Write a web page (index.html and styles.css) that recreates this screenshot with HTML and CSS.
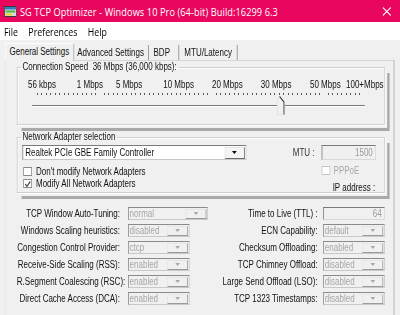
FILE: index.html
```html
<!DOCTYPE html>
<html>
<head>
<meta charset="utf-8">
<link rel="stylesheet" href="styles.css">
</head>
<body>
<div class="screen">
<div class="window">
  <div class="titlebar">
    <svg class="appicon" width="16" height="11" viewBox="0 0 16 11">
      <rect x="0.5" y="0.5" width="15" height="10" fill="#d8d8d8" stroke="#3a3a3a"/>
      <rect x="1" y="1" width="14" height="2.5" fill="#2f7fc0"/>
      <rect x="2" y="4.5" width="12" height="2" fill="#48b848"/>
      <rect x="2" y="7.5" width="8" height="2" fill="#e6d62c"/>
    </svg>
    <span class="title">SG TCP Optimizer - Windows 10 Pro (64-bit) Build:16299 6.3</span>
    <svg class="close" width="11" height="9" viewBox="0 0 11 9">
      <path d="M0.5 0.5 L10.5 8.5 M10.5 0.5 L0.5 8.5" stroke="#fff" stroke-width="1.1"/>
    </svg>
  </div>
  <div class="menubar">
    <span>File</span><span>Preferences</span><span>Help</span>
  </div>
  <div class="client">
    <div class="tabs">
      <span class="tab active">General Settings</span>
      <span class="tab">Advanced Settings</span>
      <span class="tab bdp">BDP</span>
      <span class="tab last">MTU/Latency</span>
    </div>
    <div class="tabpanel">
      <fieldset class="group speed">
        <legend>Connection Speed&nbsp; 36 Mbps (36,000 kbps):</legend>
        <div class="scale-labels">
          <span>56 kbps</span><span>1 Mbps</span><span>5 Mbps</span><span>10 Mbps</span><span>20 Mbps</span><span>30 Mbps</span><span>50 Mbps</span><span>100+Mbps</span>
        </div>
        <div class="ticks"></div>
        <div class="track">
          <svg class="thumb" width="10" height="19" viewBox="0 0 10 19">
            <path d="M0.5 4.5 L3.5 0.5 L9.5 6 L9.5 18.5 L0.5 18.5 Z" fill="#f0f0f0" stroke="#e0e0e0"/>
            <path d="M3.5 0.5 L9 6 L9 18.5" fill="none" stroke="#3c3c3c" stroke-width="1.2"/>
          </svg>
        </div>
      </fieldset>

      <fieldset class="group adapter">
        <legend>Network Adapter selection</legend>
        <div class="adapter-grid">
          <div class="adapter-left">
            <div class="combo">
              <span class="combo-text">Realtek PCIe GBE Family Controller</span>
              <span class="combo-btn"><svg width="6" height="3" viewBox="0 0 6 3"><path d="M0 0 H6 L3 3 Z" fill="#000"/></svg></span>
            </div>
            <label class="check"><span class="box"></span>Don't modify Network Adapters</label>
            <label class="check"><span class="box"><svg width="9" height="8" viewBox="0 0 9 8"><path d="M1.5 4 L3.8 6.3 L7.8 1.5" fill="none" stroke="#333" stroke-width="1.2"/></svg></span>Modify All Network Adapters</label>
          </div>
          <div class="adapter-right">
            <div class="mtu-row"><span class="mtu-label">MTU :</span><span class="field num">1500</span></div>
            <label class="check disabled pppoe"><span class="box"></span>PPPoE</label>
            <div class="ip">IP address :</div>
          </div>
        </div>
      </fieldset>

      <div class="settings">
        <span class="lbl">TCP Window Auto-Tuning:</span>
        <span class="cell"><span class="select wide"><span class="val">normal</span><span class="arr"><svg width="6" height="3" viewBox="0 0 6 3"><path d="M0 0 H6 L3 3 Z" fill="#a8a8a8"/></svg></span></span></span>
        <span class="lbl">Time to Live (TTL) :</span>
        <span class="cell right"><span class="field ttl">64</span></span>

        <span class="lbl">Windows Scaling heuristics:</span>
        <span class="cell"><span class="select"><span class="val">disabled</span><span class="arr"><svg width="6" height="3" viewBox="0 0 6 3"><path d="M0 0 H6 L3 3 Z" fill="#a8a8a8"/></svg></span></span></span>
        <span class="lbl">ECN Capability:</span>
        <span class="cell right"><span class="select"><span class="val">default</span><span class="arr"><svg width="6" height="3" viewBox="0 0 6 3"><path d="M0 0 H6 L3 3 Z" fill="#a8a8a8"/></svg></span></span></span>

        <span class="lbl">Congestion Control Provider:</span>
        <span class="cell"><span class="select"><span class="val">ctcp</span><span class="arr"><svg width="6" height="3" viewBox="0 0 6 3"><path d="M0 0 H6 L3 3 Z" fill="#a8a8a8"/></svg></span></span></span>
        <span class="lbl">Checksum Offloading:</span>
        <span class="cell right"><span class="select"><span class="val">enabled</span><span class="arr"><svg width="6" height="3" viewBox="0 0 6 3"><path d="M0 0 H6 L3 3 Z" fill="#a8a8a8"/></svg></span></span></span>

        <span class="lbl">Receive-Side Scaling (RSS):</span>
        <span class="cell"><span class="select"><span class="val">enabled</span><span class="arr"><svg width="6" height="3" viewBox="0 0 6 3"><path d="M0 0 H6 L3 3 Z" fill="#a8a8a8"/></svg></span></span></span>
        <span class="lbl">TCP Chimney Offload:</span>
        <span class="cell right"><span class="select"><span class="val">disabled</span><span class="arr"><svg width="6" height="3" viewBox="0 0 6 3"><path d="M0 0 H6 L3 3 Z" fill="#a8a8a8"/></svg></span></span></span>

        <span class="lbl">R.Segment Coalescing (RSC):</span>
        <span class="cell"><span class="select"><span class="val">enabled</span><span class="arr"><svg width="6" height="3" viewBox="0 0 6 3"><path d="M0 0 H6 L3 3 Z" fill="#a8a8a8"/></svg></span></span></span>
        <span class="lbl">Large Send Offload (LSO):</span>
        <span class="cell right"><span class="select"><span class="val">disabled</span><span class="arr"><svg width="6" height="3" viewBox="0 0 6 3"><path d="M0 0 H6 L3 3 Z" fill="#a8a8a8"/></svg></span></span></span>

        <span class="lbl">Direct Cache Access (DCA):</span>
        <span class="cell"><span class="select"><span class="val">enabled</span><span class="arr"><svg width="6" height="3" viewBox="0 0 6 3"><path d="M0 0 H6 L3 3 Z" fill="#a8a8a8"/></svg></span></span></span>
        <span class="lbl">TCP 1323 Timestamps:</span>
        <span class="cell right"><span class="select"><span class="val">disabled</span><span class="arr"><svg width="6" height="3" viewBox="0 0 6 3"><path d="M0 0 H6 L3 3 Z" fill="#a8a8a8"/></svg></span></span></span>
      </div>
    </div>
  </div>
</div>
</div>
</body>
</html>
```

FILE: styles.css
```css
* { box-sizing: border-box; }
html, body {
  margin: 0;
  padding: 0;
  width: 400px;
  height: 315px;
  overflow: hidden;
  background: #f0f0f0;
}
body {
  font-family: "Liberation Sans", Arial, sans-serif;
  font-size: 10px;
  color: #111;
}
.screen {
  width: 400px;
  height: 315px;
  overflow: hidden;
  position: relative;
}

/* The captured window is horizontally compressed: lay out at full width, then squeeze */
.window {
  position: absolute;
  left: 0;
  top: 0;
  width: 500px;
  height: 315px;
  display: flex;
  flex-direction: column;
  transform: scaleX(0.8);
  transform-origin: 0 0;
}

.titlebar {
  height: 22px;
  background: #e8065f;
  color: #fff;
  display: flex;
  align-items: center;
  padding: 0 11px 0 5px;
  flex: none;
}
.appicon { flex: none; margin-right: 4px; }
.title {
  font-family: "Open Sans", "Liberation Sans", sans-serif;
  font-size: 11.5px;
  letter-spacing: 0.1px;
  flex: 1;
  white-space: nowrap;
}
.close { flex: none; }

.menubar {
  height: 18px;
  background: #fff;
  display: flex;
  align-items: center;
  gap: 13px;
  padding-left: 5px;
  font-family: "Open Sans", "Liberation Sans", sans-serif;
  font-size: 11px;
  color: #000;
  flex: none;
}

.client { flex: 1; padding: 3px 7px 0 6px; display: flex; flex-direction: column; }

.tabs { display: flex; height: 17px; align-items: flex-end; flex: none; }
.tab {
  height: 15px;
  padding: 0 5px 0 4px;
  display: flex;
  align-items: center;
  border-right: 1px solid #8a8a8a;
  white-space: nowrap;
}
.tab.bdp { padding: 0 11px 0 6px; }
.tab.last { padding: 0 6px 0 6px; }
.tab.active {
  height: 18px;
  margin-bottom: -1px;
  background: #f0f0f0;
  border-top: 1px solid #fff;
  border-left: 1px solid #fff;
  position: relative;
  padding: 0 5px 2px 5px;
}

.tabpanel {
  flex: 1;
  border-top: 1px solid #d6d6d6;
  border-left: 1px solid #e4e4e4;
  border-right: 1px solid #a8a8a8;
  padding: 0 11px 0 14px;
}

.group {
  margin: 0;
  border: 1px solid #cfcfcf;
  padding: 0 4px;
  min-width: 0;
  box-shadow: inset 1px 1px 0 #fff, 1px 1px 0 #fff, 3px 3px 0 #f0f0f0, 6px 6px 0 #a9a9a9;
}
.group legend {
  padding: 0 2px;
  line-height: 12px;
}

.speed { height: 64px; }
.scale-labels {
  display: grid;
  grid-template-columns: 61px 49px 59px 61px 61px 61.5px 45px auto;
  padding-left: 9px;
  margin-top: 6px;
  line-height: 12px;
  white-space: nowrap;
}
.ticks {
  margin: 2px 24px 0 20px;
  height: 2px;
  background: repeating-linear-gradient(90deg, #555 0 1.2px, transparent 1.2px 5.6px);
}
.track {
  position: relative;
  margin: 10px 20px 0 14px;
  height: 2px;
  border-top: 1px solid #7a7a7a;
  border-bottom: 1px solid #fff;
}
.thumb { position: absolute; left: 306px; top: -10px; }

.adapter { margin-top: 6px; height: 62px; }
.adapter-grid { display: flex; justify-content: space-between; padding-top: 2px; }
.adapter-left { display: flex; flex-direction: column; padding-left: 1.5px; }
.combo {
  width: 280px;
  height: 15px;
  background: #fff;
  border: 1px solid #7a7a7a;
  border-right-color: #c8c8c8;
  border-bottom-color: #c8c8c8;
  display: flex;
  align-items: center;
  margin-bottom: 5px;
}
.combo-text { flex: 1; padding-left: 3px; color: #111; white-space: nowrap; }
.combo-btn {
  width: 25px;
  height: 12px;
  margin-right: 1px;
  background: #f4f4f4;
  border: 1px solid #e4e4e4;
  border-right-color: #6a6a6a;
  border-bottom-color: #6a6a6a;
  display: flex;
  align-items: center;
  justify-content: center;
}
.check { display: flex; align-items: center; height: 12.5px; gap: 5px; margin-left: 1.5px; white-space: nowrap; }
.box {
  width: 11px;
  height: 9px;
  background: #fff;
  border: 1px solid #8a8a8a;
  display: flex;
  align-items: center;
  justify-content: center;
  flex: none;
}
.box svg { display: block; }
.check.disabled { color: #a8a8a8; }
.check.disabled .box { border-color: #c4c4c4; }

.adapter-right { width: 104px; margin-right: 6px; display: flex; flex-direction: column; }
.mtu-row { display: flex; align-items: center; justify-content: space-between; height: 15px; }
.mtu-label { color: #333; }
.field {
  width: 68px;
  height: 15px;
  border: 1px solid #7a7a7a;
  border-right-color: #d8d8d8;
  border-bottom-color: #d8d8d8;
  background: #f0f0f0;
  color: #9a9a9a;
  display: flex;
  align-items: center;
  justify-content: flex-end;
  padding-right: 3px;
}
.pppoe { margin-left: 36px; margin-top: 4px; gap: 4px; }
.ip { text-align: right; margin-top: 5px; margin-right: 1px; }

.settings {
  margin-top: 12px;
  display: grid;
  grid-template-columns: 129px 90px 157px 84px;
  grid-auto-rows: 17px;
  align-items: center;
}
.lbl { text-align: right; white-space: nowrap; }
.cell { padding-left: 10px; display: flex; }
.cell.right { padding-left: 7px; }
.select {
  width: 77px;
  height: 13px;
  border: 1px solid #8a8a8a;
  border-right-color: #c8c8c8;
  border-bottom-color: #c8c8c8;
  display: flex;
  align-items: center;
  background: #f0f0f0;
  flex: none;
}
.select.wide { width: 100px; }
.val { flex: 1; color: #a6a6a6; padding-left: 1px; white-space: nowrap; }
.arr {
  width: 26px;
  height: 10px;
  margin-right: 1px;
  border: 1px solid #e6e6e6;
  border-right-color: #9a9a9a;
  border-bottom-color: #9a9a9a;
  display: flex;
  align-items: center;
  justify-content: center;
}
.arr svg, .combo-btn svg { display: block; }
.ttl { width: 78px; height: 13px; }
```
